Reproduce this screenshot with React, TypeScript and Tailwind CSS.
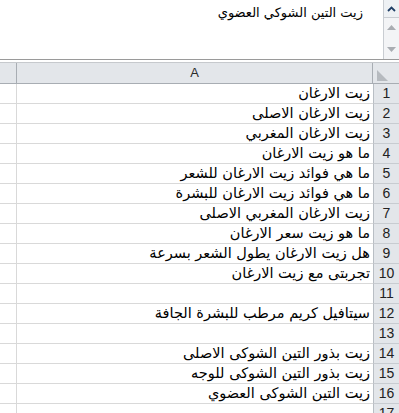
import React from "react";

const rows: string[] = [
  "زيت الارغان",
  "زيت الارغان الاصلى",
  "زيت الارغان المغربي",
  "ما هو زيت الارغان",
  "ما هي فوائد زيت الارغان للشعر",
  "ما هي فوائد زيت الارغان للبشرة",
  "زيت الارغان المغربي الاصلى",
  "ما هو زيت سعر الارغان",
  "هل زيت الارغان يطول الشعر بسرعة",
  "تجربتى مع زيت الارغان",
  "",
  "سيتافيل كريم مرطب للبشرة الجافة",
  "",
  "زيت بذور التين الشوكى الاصلى",
  "زيت بذور التين الشوكى للوجه",
  "زيت التين الشوكى العضوي",
  "",
];

const arabicFont = { fontFamily: '"DejaVu Sans", "Noto Sans", sans-serif' };

export default function App() {
  return (
    <div className="w-[399px] h-[413px] overflow-hidden bg-white select-none" style={{ fontFamily: '"Liberation Sans", Arial, sans-serif' }}>
      {/* formula bar */}
      <div className="flex h-[60px] border-b border-[#9a9a9a]">
        <div dir="rtl" className="flex-1 pr-[20px] pt-[3px] text-[13px] text-black whitespace-nowrap" style={arabicFont}>
          زيت التين الشوكي العضوي
        </div>
        <div className="w-[16px] flex flex-col border-l border-[#c9cdd2] bg-[#f3f4f6]">
          <div className="h-[18px] flex items-center justify-center border-b border-[#c9cdd2] bg-[#eef1f4]">
            <svg width="9" height="6" viewBox="0 0 9 6">
              <path d="M1 5 L4.5 1.5 L8 5" fill="none" stroke="#1f3f66" strokeWidth="1.8" />
            </svg>
          </div>
          <div className="flex-1 flex flex-col items-center justify-between py-[7px]">
            <svg width="9" height="5" viewBox="0 0 9 5">
              <path d="M0 5 L4.5 0 L9 5 Z" fill="#a9adb2" />
            </svg>
            <svg width="9" height="5" viewBox="0 0 9 5">
              <path d="M0 0 L4.5 5 L9 0 Z" fill="#a9adb2" />
            </svg>
          </div>
        </div>
      </div>
      {/* split bar */}
      <div className="h-[3px] bg-white border-b border-[#c6c9cd]" />
      {/* header row */}
      <div className="flex h-[21px] bg-[#e3e6ea] border-b border-[#a8adb3]">
        <div className="w-[17px] border-r border-[#a8adb3]" />
        <div className="flex-1 flex items-center justify-center text-[13px] text-[#2a2a2a] border-r border-[#a8adb3]">A</div>
        <div className="w-[26px] relative">
          <svg className="absolute left-[4px] bottom-[2px]" width="11" height="11" viewBox="0 0 11 11">
            <path d="M0 0 L0 11 L11 11 Z" fill="#b6babf" />
          </svg>
        </div>
      </div>
      {/* rows */}
      {rows.map((t, i) => (
        <div key={i} className="flex h-[20px]">
          <div className="w-[17px] border-r border-b border-[#d9d9d9]" />
          <div dir="rtl" className="flex-1 border-b border-[#d9d9d9] pr-[3px] text-[14.5px] leading-[19px] text-black whitespace-nowrap overflow-hidden" style={arabicFont}>
            {t}
          </div>
          <div className="w-[26px] bg-[#e3e6ea] border-l border-[#b9bec4] border-b border-b-[#c8ccd1] flex items-center justify-center text-[14px] text-[#222]">
            {i + 1}
          </div>
        </div>
      ))}
    </div>
  );
}
